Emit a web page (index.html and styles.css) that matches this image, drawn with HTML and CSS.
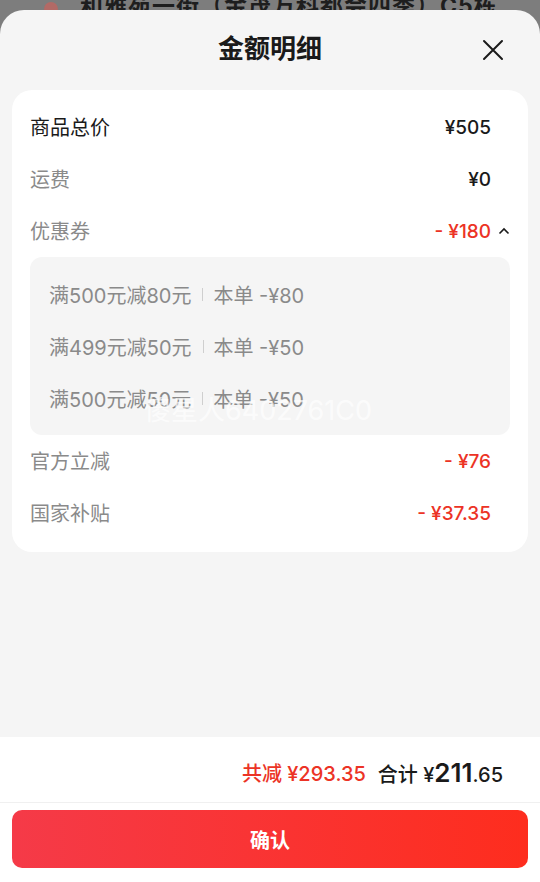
FILE: index.html
```html
<!DOCTYPE html>
<html>
    <head>
        <title>金额明细</title>
        <meta name="viewport" content="width=device-width, initial-scale=1">
        <link rel="stylesheet" href="styles.css">
    </head>
    <body>
        <div class="backdrop">
            <span class="dot"></span>
            <span class="addr">和雅苑一街（金茂万科都会四季）C5栋</span>
        </div>
        <div class="sheet">
            <div class="head">
                <h1>金额明细</h1>
                <svg class="close" width="22" height="22" viewBox="0 0 22 22">
                    <path d="M2 2 L20 20 M20 2 L2 20" stroke="#1a1a1a" stroke-width="2" fill="none" stroke-linecap="round"/>
                </svg>
            </div>

            <div class="card">
                <div class="row">
                    <span class="label dark">商品总价</span>
                    <span class="val">¥505</span>
                </div>
                <div class="row">
                    <span class="label">运费</span>
                    <span class="val">¥0</span>
                </div>
                <div class="row">
                    <span class="label">优惠券</span>
                    <span class="val red">-&nbsp;¥180</span>
                    <svg class="caret" width="12" height="8" viewBox="0 0 12 8">
                        <path d="M1.5 6.5 L6 2 L10.5 6.5" stroke="#1a1a1a" stroke-width="1.6" fill="none"/>
                    </svg>
                </div>
                <ul class="coupons">
                    <li>满500元减80元<i class="sep"></i>本单 -¥80</li>
                    <li>满499元减50元<i class="sep"></i>本单 -¥50</li>
                    <li>满500元减50元<i class="sep"></i>本单 -¥50</li>
                </ul>
                <div class="row">
                    <span class="label">官方立减</span>
                    <span class="val red">-&nbsp;¥76</span>
                </div>
                <div class="row">
                    <span class="label">国家补贴</span>
                    <span class="val red">-&nbsp;¥37.35</span>
                </div>
            </div>

            <div class="foot">
                <div class="sum">
                    <span class="red">共减 ¥293.35</span>
                    <span class="total">合计 ¥<b>211</b>.65</span>
                </div>
                <button class="ok">确认</button>
            </div>
        </div>
        <div class="mark">傻星人6402761C0</div>
    </body>
</html>
```

FILE: styles.css
```css
* {box-sizing: border-box; margin: 0; padding: 0;}
body {width: 540px; height: 882px; overflow: hidden; background: #7d7d7d; font-family: Inter, "Noto Sans CJK SC", sans-serif; position: relative;}

.backdrop {height: 10px; overflow: hidden; display: flex; align-items: flex-start; gap: 22px; padding-left: 44px;}
.backdrop .dot {width: 14px; height: 14px; border-radius: 50%; background: #b26a66; margin-top: 2px;}
.backdrop .addr {font-size: 23px; font-weight: bold; color: #1e1e1e; line-height: 23px; margin-top: -5px; letter-spacing: 1px;}

.sheet {height: 872px; background: #f5f5f5; border-radius: 24px 24px 0 0; display: flex; flex-direction: column;}
.head {height: 80px; display: flex; align-items: center; justify-content: center; position: relative;}
.head h1 {font-size: 26px; font-weight: bold; color: #1a1a1a; line-height: 1; margin-top: -2px;}
.head .close {position: absolute; right: 36px; top: 29px;}

.card {margin: 0 12px; background: #fff; border-radius: 20px; padding: 11px 18px 13px 18px;}
.row {height: 52px; display: flex; align-items: center; padding-right: 19px; position: relative;}
.label {flex: 1; font-size: 20px; color: #8a8a8a; margin-top: -2px;}
.label.dark {color: #1a1a1a;}
.val {font-size: 19px; color: #1a1a1a; font-weight: 500;}
.red {color: #ec3325;}
.caret {position: absolute; right: 0; top: 22px;}

.coupons {list-style: none; background: #f5f5f5; border-radius: 12px; padding: 11px 19px;}
.coupons li {height: 52px; display: flex; align-items: center; font-size: 20px; color: #8a8a8a;}
.coupons .sep {display: inline-block; width: 1px; height: 13px; background: #cfcfcf; margin: 0 10px 0 11px;}

.foot {margin-top: auto; background: #fff; padding: 0 12px 14px;}
.sum {height: 66px; display: flex; align-items: center; justify-content: flex-end; gap: 12px; padding: 6px 37px 0 0; font-size: 20px; font-weight: 500; border-bottom: 1px solid #f0f0f0; margin: 0 -12px;}
.total {color: #1a1a1a;}
.total b {font-size: 26px; font-weight: 600;}
.ok {display: block; width: 100%; height: 58px; margin-top: 7px; border: none; border-radius: 10px; background: linear-gradient(90deg, #f53a48, #fe2d1e); color: #fff; font-family: inherit; font-size: 20px; font-weight: bold;}

.mark {position: absolute; left: 144px; top: 389px; font-size: 27px; color: rgba(255, 255, 255, 0.7);}
```
